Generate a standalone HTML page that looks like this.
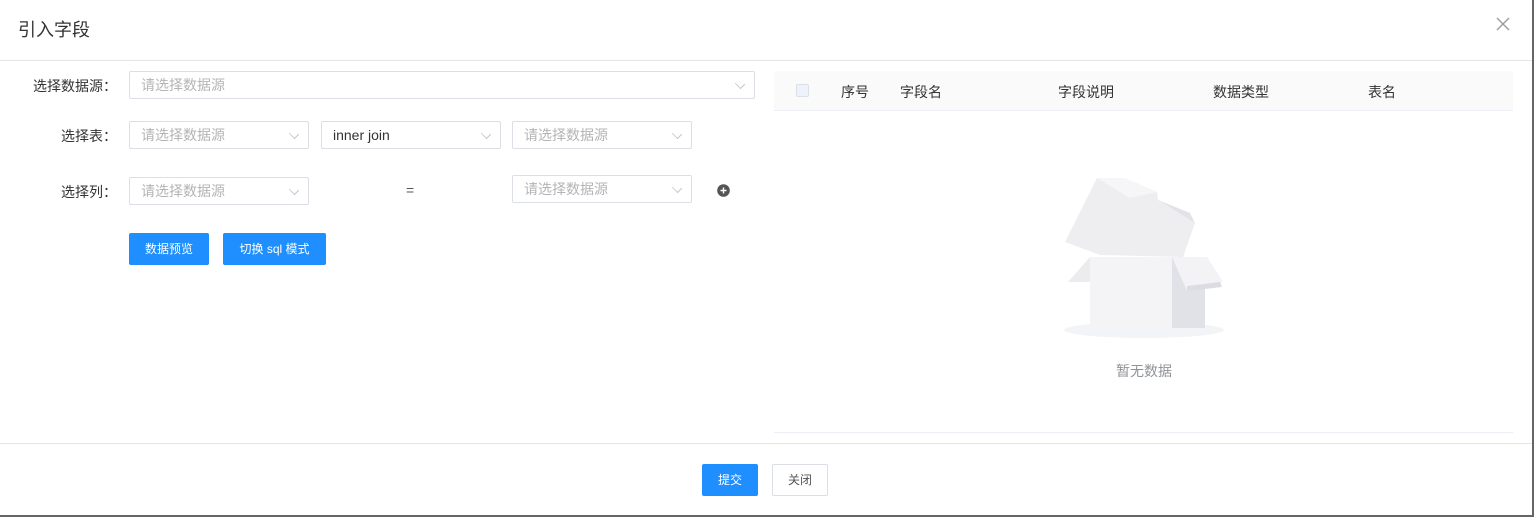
<!DOCTYPE html>
<html><head><meta charset="utf-8"><style>
*{box-sizing:border-box;margin:0;padding:0}
body{width:1534px;height:517px;background:#fff;font-family:"Liberation Sans","Noto Sans CJK SC",sans-serif;position:relative;overflow:hidden;color:#333}
.a{position:absolute}
.sel{position:absolute;border:1px solid #dcdfe6;border-radius:2px;height:28px;font-size:14px;color:#b4b4b4;padding-left:11px;line-height:26px;background:#fff}
.sel .ar{position:absolute;right:10px;top:8px;width:8px;height:8px;border-right:1px solid #c0c4cc;border-bottom:1px solid #c0c4cc;transform:rotate(45deg) scale(1,0.8)}
.lbl{position:absolute;font-size:14px;color:#333;text-align:right;line-height:20px}
.btn{position:absolute;background:#1f8fff;color:#fff;font-size:12px;text-align:center;border-radius:2px;height:32px;line-height:32px}
.th{position:absolute;top:82px;font-size:14px;color:#333}
</style></head><body>
<div class="a" style="left:18px;top:16px;font-size:18px;color:#333">引入字段</div>
<svg class="a" style="left:1496px;top:17px" width="14" height="14"><path d="M1 1L13 13M13 1L1 13" stroke="#999" stroke-width="1.3"/></svg>
<div class="a" style="left:0;top:60px;width:1532px;height:1px;background:#e6e6e6"></div>

<div class="lbl" style="left:0px;top:76px;width:117px">选择数据源：</div>
<div class="sel" style="left:129px;top:71px;width:626px">请选择数据源<span class="ar"></span></div>

<div class="lbl" style="left:0px;top:126px;width:117px">选择表：</div>
<div class="sel" style="left:129px;top:121px;width:180px">请选择数据源<span class="ar"></span></div>
<div class="sel" style="left:321px;top:121px;width:180px;color:#333">inner join<span class="ar"></span></div>
<div class="sel" style="left:512px;top:121px;width:180px">请选择数据源<span class="ar"></span></div>

<div class="lbl" style="left:0px;top:182px;width:117px">选择列：</div>
<div class="sel" style="left:129px;top:177px;width:180px">请选择数据源<span class="ar"></span></div>
<div class="a" style="left:406px;top:182px;font-size:14px;color:#555">=</div>
<div class="sel" style="left:512px;top:175px;width:180px">请选择数据源<span class="ar"></span></div>
<svg class="a" style="left:717px;top:184px" width="13" height="13"><circle cx="6.5" cy="6.5" r="6.3" fill="#555"/><path d="M6.5 3.5V9.5M3.5 6.5H9.5" stroke="#fff" stroke-width="1.4"/></svg>

<div class="btn" style="left:129px;top:233px;width:80px">数据预览</div>
<div class="btn" style="left:223px;top:233px;width:103px">切换 sql 模式</div>

<div class="a" style="left:774px;top:71px;width:739px;height:40px;background:#fafafa;border-bottom:1px solid #ebeef5"></div>
<div class="a" style="left:796px;top:84px;width:13px;height:13px;border:1px solid #dcdfe6;background:#eef2fb;border-radius:2px"></div>
<div class="th" style="left:841px">序号</div>
<div class="th" style="left:900px">字段名</div>
<div class="th" style="left:1058px">字段说明</div>
<div class="th" style="left:1213px">数据类型</div>
<div class="th" style="left:1368px">表名</div>

<svg class="a" style="left:1040px;top:160px" width="200" height="200">
<ellipse cx="104" cy="170" rx="80" ry="8" fill="#f3f4f7"/>
<polygon points="28,122 50,97 50,122" fill="#ececee"/>
<polygon points="50,97 132,97 132,168 50,168" fill="#f4f4f6"/>
<polygon points="132,97 165,97 165,168 132,168" fill="#e1e2e7"/>
<polygon points="132,97 167,97 183,122 147,131" fill="#f3f3f5"/>
<polygon points="147,126 180,122 182,127 147,131" fill="#dcdde2"/>
<polygon points="25,82 57,18 85,18 117,32 118,40 155,63 143,97 60,95" fill="#eeeef1"/>
<polygon points="57,18 85,18 117,32 90,38" fill="#f6f6f8"/>
<polygon points="118,40 150,53 155,63" fill="#e3e3e7"/>
</svg>
<div class="a" style="left:1116px;top:361px;font-size:14px;color:#909399">暂无数据</div>
<div class="a" style="left:774px;top:432px;width:739px;height:1px;background:#ebeef5"></div>

<div class="a" style="left:0;top:443px;width:1532px;height:1px;background:#e6e6e6"></div>
<div class="btn" style="left:702px;top:464px;width:56px">提交</div>
<div class="a" style="left:772px;top:464px;width:56px;height:32px;border:1px solid #dcdfe6;border-radius:2px;font-size:12px;text-align:center;line-height:30px;color:#555">关闭</div>

<div class="a" style="left:1532px;top:0;width:2px;height:517px;background:#666"></div>
<div class="a" style="left:0;top:515px;width:1534px;height:2px;background:#666"></div>
</body></html>
